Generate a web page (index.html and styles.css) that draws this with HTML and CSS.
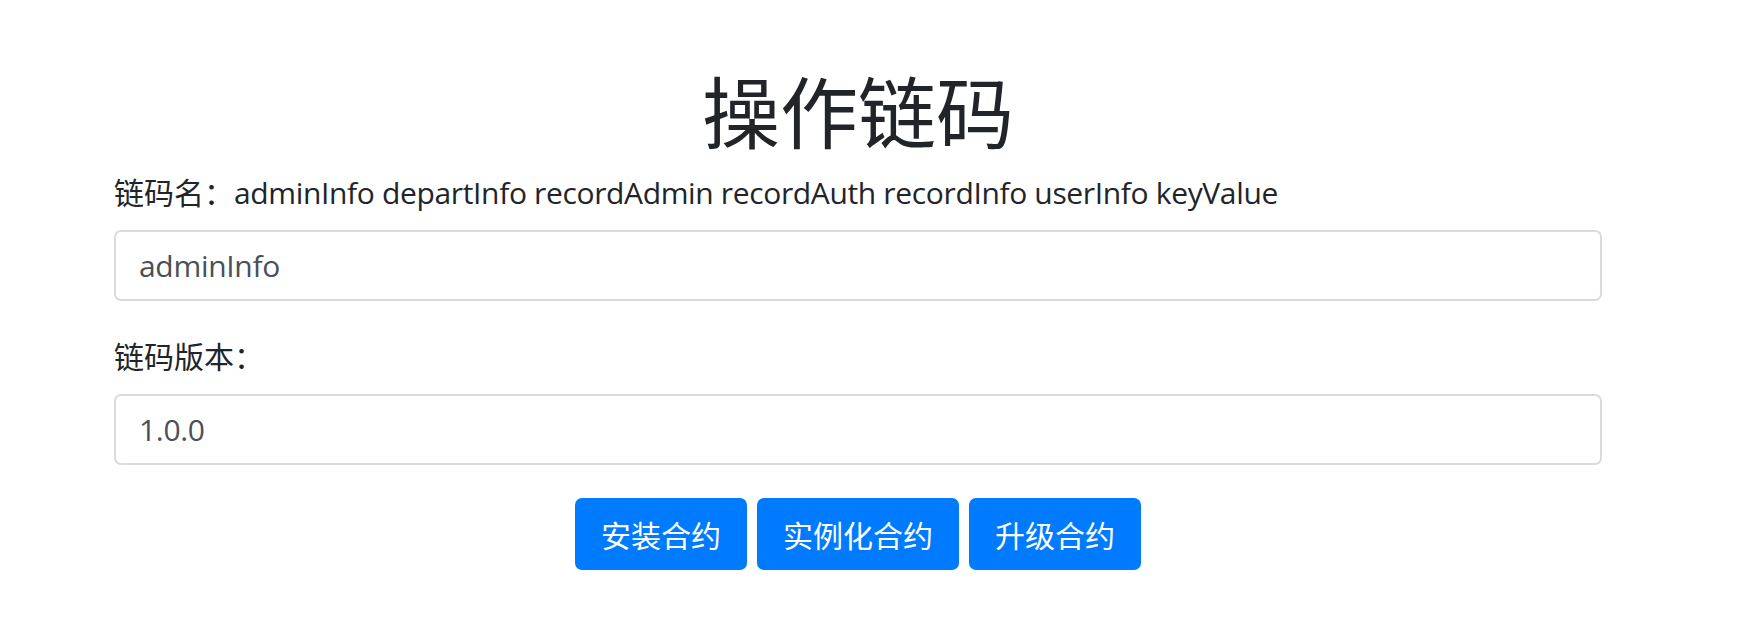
FILE: index.html
```html
<!DOCTYPE html>
<html lang="zh-CN">
<head>
<meta charset="utf-8">
<title>操作链码</title>
<link rel="stylesheet" href="styles.css">
</head>
<body>
<main class="page">
  <h1 class="title">操作链码</h1>
  <div class="form-group">
    <label class="label">链码名：<span class="names">adminInfo departInfo recordAdmin recordAuth recordInfo userInfo keyValue</span></label>
    <input class="form-control" type="text" value="adminInfo">
  </div>
  <div class="form-group">
    <label class="label">链码版本：</label>
    <input class="form-control" type="text" value="1.0.0">
  </div>
  <div class="actions">
    <button class="btn">安装合约</button>
    <button class="btn">实例化合约</button>
    <button class="btn">升级合约</button>
  </div>
</main>
</body>
</html>
```
FILE: styles.css
```css
* { box-sizing: border-box; }
html, body { margin: 0; padding: 0; background: #fff; }
body {
  font-family: "Open Sans", "Noto Sans CJK SC", sans-serif;
  color: #212529;
  font-size: 30px;
  line-height: 1.5;
}
.page {
  width: 1488px;
  margin-left: 114px;
  display: flex;
  flex-direction: column;
}
.title {
  margin: 64px 0 16px;
  font-family: "Noto Sans CJK SC", sans-serif;
  font-size: 78px;
  font-weight: 400;
  line-height: 90px;
  text-align: center;
  color: #212529;
}
.form-group { display: flex; flex-direction: column; margin-bottom: 33px; }
.label { display: block; margin-bottom: 15px; line-height: 45px; }
.names { letter-spacing: -0.35px; }
.form-control {
  display: block;
  width: 100%;
  height: 71px;
  padding: 0 23px;
  font: inherit;
  font-size: 30px;
  letter-spacing: -0.3px;
  color: #495057;
  background: #fff;
  border: 2px solid #d8dce1;
  border-radius: 7px;
  outline: none;
}
.actions { display: flex; justify-content: center; gap: 10px; }
.btn {
  height: 72px;
  padding: 0 26px;
  font-family: "Noto Sans CJK SC", sans-serif;
  font-size: 30px;
  color: #fff;
  background: #007bff;
  border: 0;
  border-radius: 7px;
}
```
